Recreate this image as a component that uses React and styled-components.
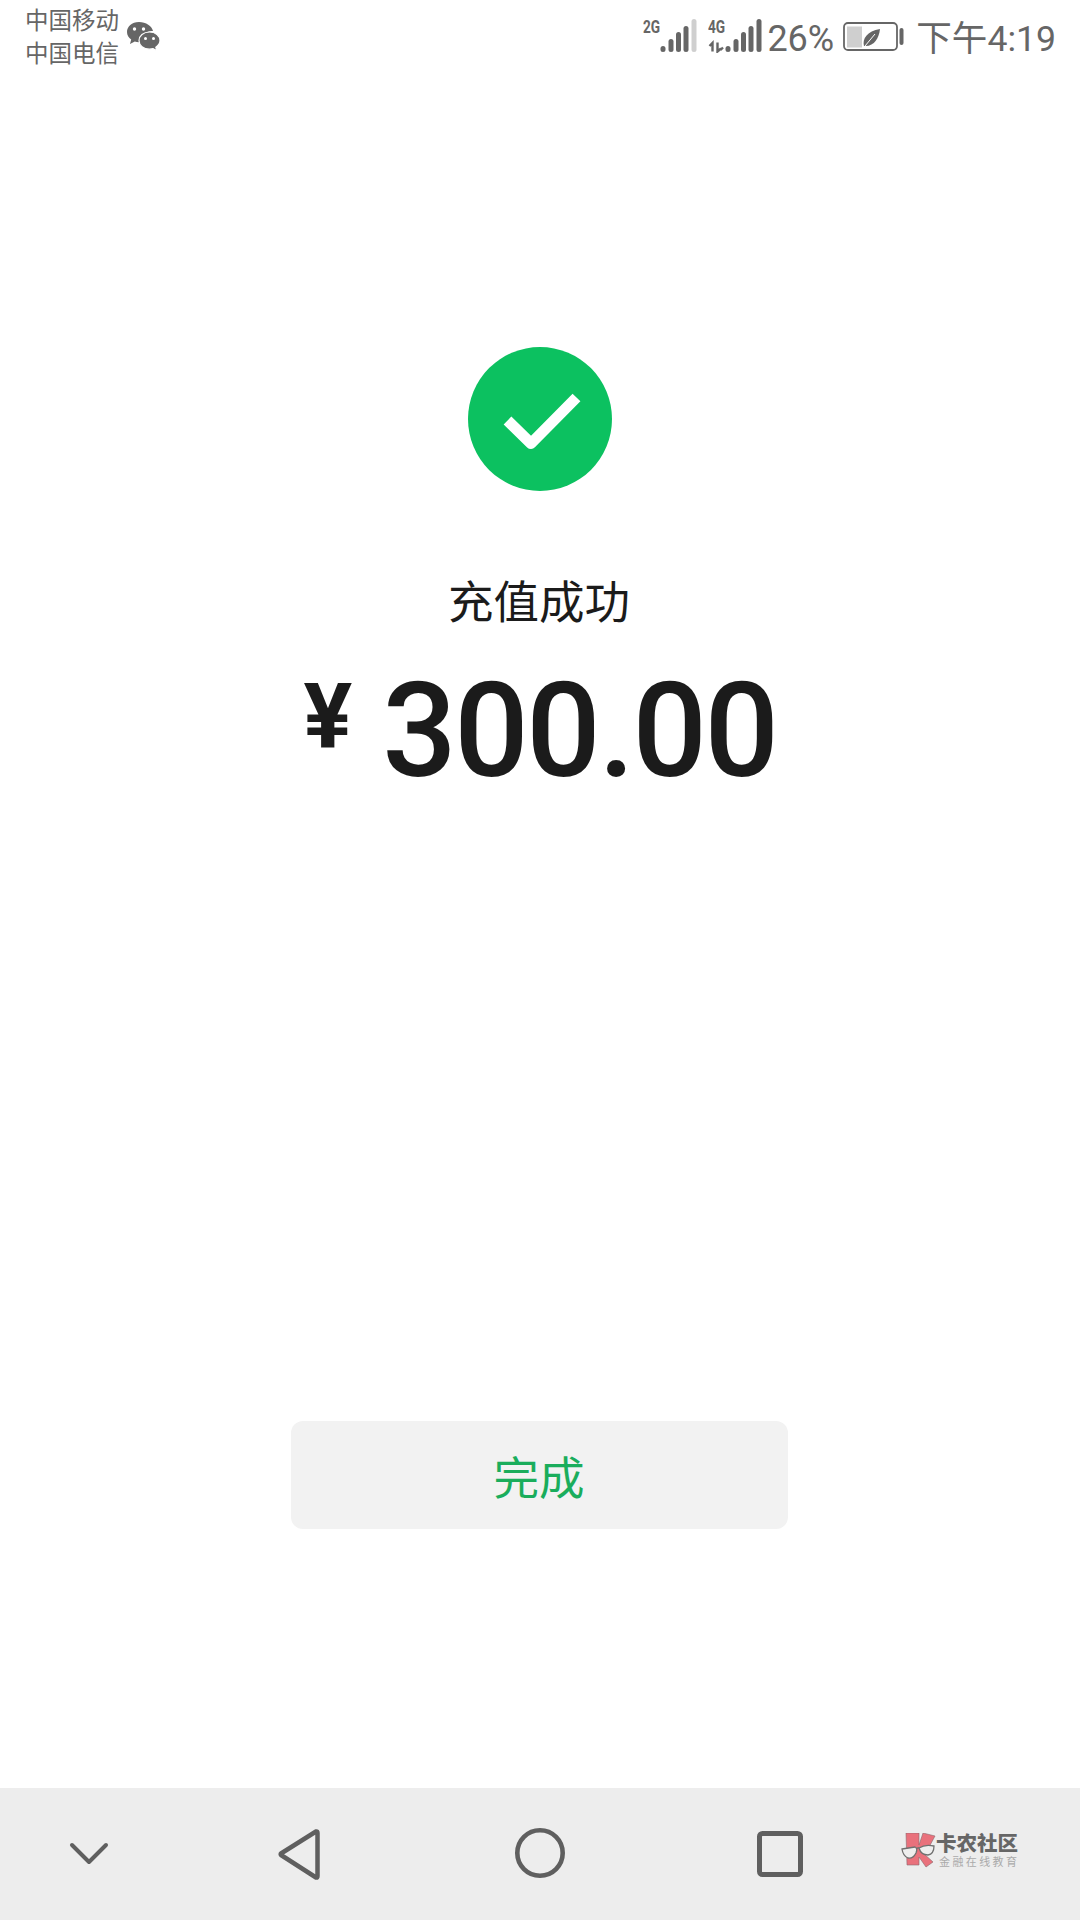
import React from 'react';
import styled, { createGlobalStyle } from 'styled-components';

const Global = createGlobalStyle`
  html, body { margin: 0; padding: 0; background: #fff; }
  * { box-sizing: border-box; }
`;

const CJK = `Roboto, "Noto Sans CJK SC", sans-serif`;

const Page = styled.div`
  width: 1080px;
  height: 1920px;
  display: flex;
  flex-direction: column;
  background: #fff;
  font-family: ${CJK};
  overflow: hidden;
`;

const StatusBar = styled.header`
  height: 75px;
  flex: none;
  display: flex;
  justify-content: space-between;
  padding: 4px 24px 0 25px;
  color: #666;
`;
const StatusLeft = styled.div`
  display: flex;
  align-items: flex-start;
`;
const Carriers = styled.div`
  font-size: 23.5px;
  line-height: 33px;
  margin-top: 1px;
  white-space: nowrap;
`;
const WeChatGlyph = styled.svg`
  width: 36px;
  height: 32px;
  margin: 17px 0 0 6px;
  flex: none;
`;
const StatusRight = styled.div`
  display: flex;
  align-items: flex-start;
`;
const Signal = styled.div`
  position: relative;
  width: 56px;
  height: 36px;
  margin: 13px 9px 0 0;
  flex: none;
`;
const NetLabel = styled.span`
  position: absolute;
  left: 0;
  top: 0;
  font: 700 19px/20px Roboto, sans-serif;
  display: inline-block;
  transform: scaleX(0.72);
  transform-origin: left center;
  color: #666;
`;
const BarsGlyph = styled.svg`
  position: absolute;
  left: 0;
  top: 0;
  width: 56px;
  height: 36px;
`;
const Percent = styled.span`
  font-size: 36px;
  line-height: 40px;
  margin: 15px 0 0 -6px;
`;
const BatteryGlyph = styled.svg`
  width: 62px;
  height: 30px;
  margin: 18px 0 0 9px;
  flex: none;
`;
const Clock = styled.span`
  font-size: 35.6px;
  line-height: 40px;
  margin: 15px 0 0 11px;
  white-space: nowrap;
`;

const Main = styled.main`
  flex: 1;
  display: flex;
  flex-direction: column;
  align-items: center;
  padding-top: 272px;
`;
const SuccessBadge = styled.div`
  width: 144px;
  height: 144px;
  border-radius: 50%;
  background: #0cc160;
  display: flex;
  align-items: center;
  justify-content: center;
`;
const Title = styled.h1`
  margin: 86px 2px 0 0;
  font-size: 45.5px;
  line-height: 54px;
  font-weight: 400;
  color: #1b1b1b;
`;
const Amount = styled.div`
  margin-top: 33px;
  height: 134px;
  display: flex;
  align-items: flex-start;
  color: #1b1b1b;
  font-family: Roboto, sans-serif;
  font-weight: 500;
  white-space: nowrap;
`;
const Currency = styled.span`
  font-size: 91px;
  line-height: 107px;
  font-weight: 700;
  margin-right: 30px;
`;
const Value = styled.span`
  font-size: 131px;
  line-height: 134px;
  letter-spacing: -2.4px;
`;
const DoneButton = styled.button`
  margin: 623px 1px 0 0;
  width: 497px;
  height: 108px;
  border: 0;
  border-radius: 12px;
  background: #f2f2f2;
  color: #1aad5c;
  font-family: ${CJK};
  font-size: 45.5px;
  padding: 0 1px 0 0;
`;

const NavBar = styled.nav`
  height: 132px;
  flex: none;
  background: #ededed;
  display: flex;
  align-items: flex-start;
`;
const NavIcon = styled.svg`
  flex: none;
  margin-top: ${p => p.$top}px;
  margin-left: ${p => p.$left}px;
`;
const Brand = styled.div`
  margin: 45px 0 0 95px;
  display: flex;
  align-items: flex-start;
`;
const BrandMark = styled.svg`
  width: 38px;
  height: 36px;
  flex: none;
`;
const BrandText = styled.div`
  margin-left: -1px;
  display: flex;
  flex-direction: column;
`;
const BrandName = styled.span`
  font-size: 20.5px;
  line-height: 22px;
  font-weight: 900;
  color: #666;
  white-space: nowrap;
`;
const BrandSub = styled.span`
  font-size: 11px;
  line-height: 13px;
  margin: 1px 0 0 3px;
  letter-spacing: 2.4px;
  color: #aaa;
  white-space: nowrap;
`;

const BAR_X = [20, 28, 35.5, 43, 51];
const BAR_TOP = [29, 22, 15, 9, 2];

function SignalIcon({ label, lastLight, arrows }) {
  return (
    <Signal>
      <NetLabel>{label}</NetLabel>
      <BarsGlyph viewBox="0 0 56 36">
        {BAR_X.map((x, i) => (
          <rect
            key={i}
            x={x - 2.5}
            y={BAR_TOP[i]}
            width="5"
            height={35 - BAR_TOP[i]}
            rx="2.5"
            fill={lastLight && i === 4 ? '#cfcfcf' : '#666'}
          />
        ))}
        {arrows && (
          <path
            d="M4.500 34.500V26M1.500 29L4.500 26V34.500M9.500 25.500V34.500L13 31.500M15 30.500l-2.500 2.500"
            stroke="#666"
            strokeWidth="2.400"
            fill="none"
          />
        )}
      </BarsGlyph>
    </Signal>
  );
}

export default function App() {
  return (
    <Page>
      <Global />
      <StatusBar>
        <StatusLeft>
          <Carriers>
            中国移动
            <br />
            中国电信
          </Carriers>
          <WeChatGlyph viewBox="0 0 36 32">
            <path d="M14 1C6.800 1 2 5.600 2 11c0 3.200 1.600 5.800 4.200 7.600L5 23l4.800-2.400c1.300.4 2.500.6 4.200.6 1 0 2-.1 3-.3C16.500 14 22 9.400 28 10 27 5 21 1 14 1z" fill="#666" />
            <circle cx="9.500" cy="8" r="1.700" fill="#fff" />
            <circle cx="18.500" cy="8" r="1.700" fill="#fff" />
            <path d="M24.500 11C18.400 11 14 15 14 19.600s4.400 8.600 10.500 8.600c1.300 0 2.500-.2 3.600-.5l3.700 2.100-1-3.600c2.600-1.600 4.200-4 4.200-6.600 0-4.600-4.400-8.600-10.500-8.600z" fill="#666" stroke="#fff" strokeWidth="1.200" />
            <circle cx="20.500" cy="17.500" r="1.500" fill="#fff" />
            <circle cx="28.500" cy="17.500" r="1.500" fill="#fff" />
          </WeChatGlyph>
        </StatusLeft>
        <StatusRight>
          <SignalIcon label="2G" lastLight />
          <SignalIcon label="4G" arrows />
          <Percent>26%</Percent>
          <BatteryGlyph viewBox="0 0 62 30">
            <rect x="1" y="1" width="53" height="27" rx="4" fill="none" stroke="#666" strokeWidth="1.800" />
            <rect x="4" y="4.500" width="15" height="21" fill="#cfcfcf" />
            <path d="M21 24c-2-7 3-15 16-17-1 9-6 18-16 17z" fill="#666" />
            <path d="M22 24L32 12" stroke="#fff" strokeWidth="1" />
            <rect x="56.500" y="6" width="4" height="17" rx="2" fill="#666" />
          </BatteryGlyph>
          <Clock>下午4:19</Clock>
        </StatusRight>
      </StatusBar>
      <Main>
        <SuccessBadge>
          <svg width="144" height="144" viewBox="0 0 144 144">
            <path d="M39.500 78.500L63 101.500L108.500 55.500" transform="translate(0 -5)" fill="none" stroke="#fff" strokeWidth="11" strokeLinejoin="round" />
          </svg>
        </SuccessBadge>
        <Title>充值成功</Title>
        <Amount>
          <Currency>¥</Currency>
          <Value>300.00</Value>
        </Amount>
        <DoneButton>完成</DoneButton>
      </Main>
      <NavBar>
        <NavIcon $left={67} $top={52} width="44" height="28" viewBox="0 0 44 28">
          <path d="M5 5L22 22L39 5" fill="none" stroke="#5f5f5f" strokeWidth="4" strokeLinecap="round" strokeLinejoin="round" />
        </NavIcon>
        <NavIcon $left={165} $top={39} width="46" height="54" viewBox="0 0 46 54">
          <path d="M40 4.500L5 26.500a1 1 0 0 0 0 1.500L40 50.500q1.500 .5 1.500-1.500V6q0-2-1.500-1.500z" fill="none" stroke="#5f5f5f" strokeWidth="4.500" strokeLinejoin="round" />
        </NavIcon>
        <NavIcon $left={192} $top={38} width="52" height="54" viewBox="0 0 52 54">
          <circle cx="26" cy="27" r="22.700" fill="none" stroke="#5f5f5f" strokeWidth="4.600" />
        </NavIcon>
        <NavIcon $left={190} $top={41} width="48" height="50" viewBox="0 0 48 50">
          <rect x="3.500" y="4.500" width="41" height="41" rx="3" fill="none" stroke="#5f5f5f" strokeWidth="5" />
        </NavIcon>
        <Brand>
          <BrandMark viewBox="0 0 38 36">
            <path d="M7 0H20V12L24 0L36 3L29 16L23 19L34 29L27 34L20 24V32H8Z" fill="#e9717c" stroke="#8a6a6e" strokeWidth="0.600" />
            <path d="M3 16L16 14Q19 15 17 20Q14 26 9 25Q4 23 3 16Z" fill="#eee" stroke="#707070" strokeWidth="1.300" />
            <path d="M20 15Q26 11 35 13Q35 21 29 22Q22 22 20 15Z" fill="#eee" stroke="#707070" strokeWidth="1.300" />
            <path d="M17 16Q18.500 14.500 20 15" fill="none" stroke="#707070" strokeWidth="1.300" />
          </BrandMark>
          <BrandText>
            <BrandName>卡农社区</BrandName>
            <BrandSub>金融在线教育</BrandSub>
          </BrandText>
        </Brand>
      </NavBar>
    </Page>
  );
}
